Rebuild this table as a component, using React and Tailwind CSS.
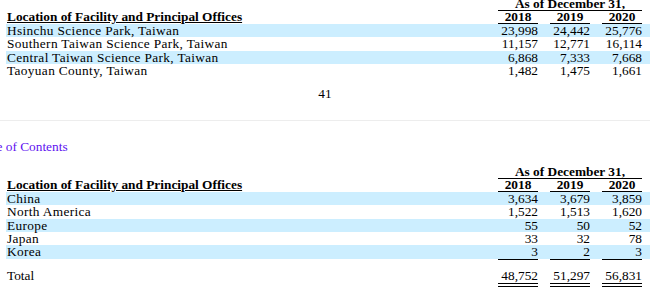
import React from 'react';

const topRows = [
  ['Hsinchu Science Park, Taiwan', '23,998', '24,442', '25,776'],
  ['Southern Taiwan Science Park, Taiwan', '11,157', '12,771', '16,114'],
  ['Central Taiwan Science Park, Taiwan', '6,868', '7,333', '7,668'],
  ['Taoyuan County, Taiwan', '1,482', '1,475', '1,661'],
];

const bottomRows = [
  ['China', '3,634', '3,679', '3,859'],
  ['North America', '1,522', '1,513', '1,620'],
  ['Europe', '55', '50', '52'],
  ['Japan', '33', '32', '78'],
  ['Korea', '3', '2', '3'],
];

const years = ['2018', '2019', '2020'];

function HeaderRows() {
  return (
    <>
      <div className="flex h-[14px] pr-[8px]">
        <div className="flex-1" />
        <div className="w-[144px] h-[13px] border-b border-black text-center font-bold box-content whitespace-nowrap">
          As of December 31,
        </div>
      </div>
      <div className="flex h-[13px] pr-[8px] leading-[12px]">
        <div className="flex-1 pl-[1px] font-bold underline underline-offset-[1px] whitespace-nowrap">
          Location of Facility and Principal Offices
        </div>
        {years.map((y, i) => (
          <div
            key={y}
            className={`w-[40px] h-[12px] box-content border-b border-black text-center font-bold ${i > 0 ? 'ml-[12px]' : ''}`}
          >
            {y}
          </div>
        ))}
      </div>
    </>
  );
}

function DataRow({ row, shaded }) {
  return (
    <div className={`flex h-[13.33px] pr-[8px] ${shaded ? 'bg-[#cceeff]' : ''}`}>
      <div className="flex-1 pl-[1px] whitespace-nowrap tracking-[0.35px]">{row[0]}</div>
      {row.slice(1).map((v, i) => (
        <div key={i} className={`w-[40px] text-right ${i > 0 ? 'ml-[12px]' : ''}`}>
          {v}
        </div>
      ))}
    </div>
  );
}

function NumberCells({ className }) {
  return (
    <div className="flex pr-[8px]">
      <div className="flex-1" />
      {[0, 1, 2].map((i) => (
        <div key={i} className={`w-[40px] ${className} ${i > 0 ? 'ml-[12px]' : ''}`} />
      ))}
    </div>
  );
}

export default function App() {
  return (
    <div className="w-[650px] h-[290px] overflow-hidden bg-white text-black font-[family-name:'Liberation_Serif','Times_New_Roman',serif] text-[13.33px] leading-[13.33px]">
      {/* first table, continued from previous page */}
      <div className="mt-[-3px] ml-[6px]">
        <HeaderRows />
        {topRows.map((r, i) => (
          <DataRow key={r[0]} row={r} shaded={i % 2 === 0} />
        ))}
      </div>

      <div className="mt-[10px] h-[13.33px] text-center">41</div>

      <div className="mt-[19.33px] h-px bg-[#ededed]" />

      <div className="mt-[18.67px] ml-[-27px] h-[13.33px] whitespace-nowrap text-[#6010f0]">
        Table of Contents
      </div>

      <div className="mt-[12px] ml-[6px]">
        <HeaderRows />
        {bottomRows.map((r, i) => (
          <DataRow key={r[0]} row={r} shaded={i % 2 === 0} />
        ))}
        <NumberCells className="h-[10.33px] border-t border-black" />
        <div className="flex h-[14px] pr-[8px]">
          <div className="flex-1 pl-[1px]">Total</div>
          {['48,752', '51,297', '56,831'].map((v, i) => (
            <div key={v} className={`w-[40px] text-right ${i > 0 ? 'ml-[12px]' : ''}`}>
              {v}
            </div>
          ))}
        </div>
        <NumberCells className="h-[4px] border-y border-black" />
      </div>
    </div>
  );
}
